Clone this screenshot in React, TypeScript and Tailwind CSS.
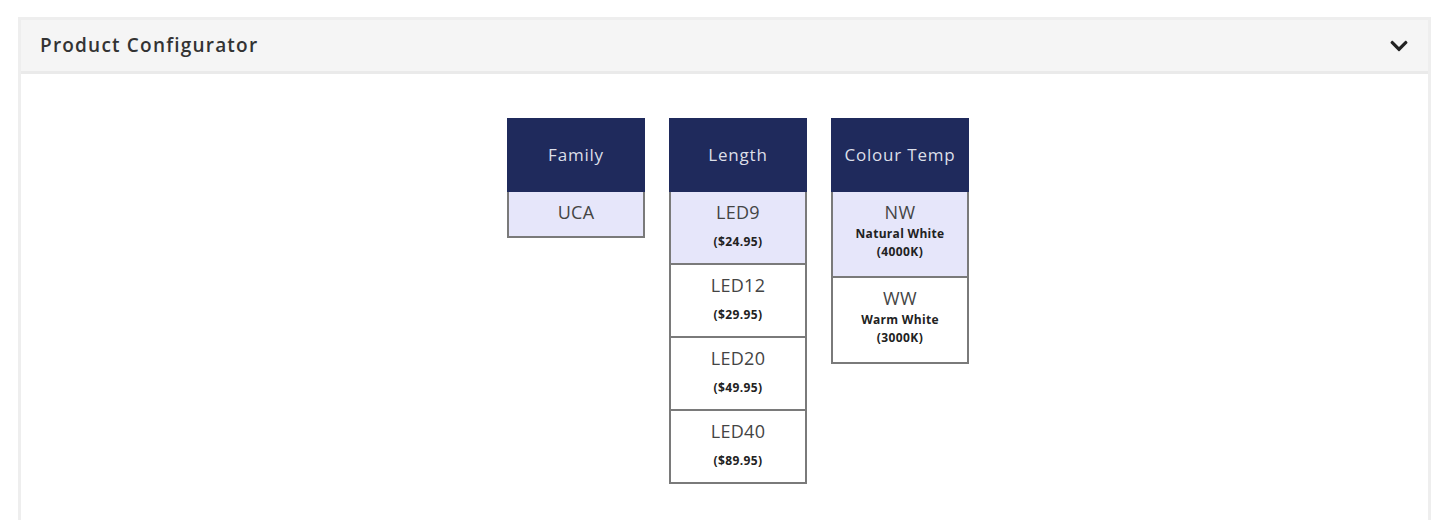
import React from 'react';
import { FaChevronDown } from 'react-icons/fa';

interface Option {
  code: string;
  label?: string;
  sub?: string;
  selected?: boolean;
}

interface Column {
  title: string;
  rowHeight: string;
  options: Option[];
}

const COLUMNS: Column[] = [
  {
    title: 'Family',
    rowHeight: 'h-[46px]',
    options: [{ code: 'UCA', selected: true }],
  },
  {
    title: 'Length',
    rowHeight: 'h-[73px]',
    options: [
      { code: 'LED9', sub: '($24.95)', selected: true },
      { code: 'LED12', sub: '($29.95)' },
      { code: 'LED20', sub: '($49.95)' },
      { code: 'LED40', sub: '($89.95)' },
    ],
  },
  {
    title: 'Colour Temp',
    rowHeight: 'h-[86px]',
    options: [
      { code: 'NW', label: 'Natural White', sub: '(4000K)', selected: true },
      { code: 'WW', label: 'Warm White', sub: '(3000K)' },
    ],
  },
];

const OptionColumn: React.FC<{ column: Column }> = ({ column }) => (
  <div className="w-[138px] border-2 border-b-0 border-[#7a7a7a] self-start">
    {/* Column heading */}
    <div className="h-[74px] -mx-[2px] -mt-[2px] bg-[#1f2a5c] flex items-center justify-center text-[17px] tracking-[0.8px] text-[#dcdfe8]">
      {column.title}
    </div>
    {column.options.map(opt => (
      <div
        key={opt.code}
        className={`${column.rowHeight} flex flex-col items-center pt-[9px] text-[#444] border-b-2 border-[#7a7a7a] cursor-pointer ${
          opt.selected ? 'bg-[#e6e6fa]' : 'bg-white'
        }`}
      >
        <span className="text-[18px] leading-[22px] tracking-[0.3px]">{opt.code}</span>
        {opt.label && (
          <span className="text-[12px] leading-[18px] font-bold text-[#222] tracking-[0.3px] mt-[2px]">
            {opt.label}
          </span>
        )}
        {opt.sub && (
          <span
            className={`text-[12px] leading-[18px] font-bold text-[#222] tracking-[0.4px] ${
              opt.label ? '' : 'mt-[10px]'
            }`}
          >
            {opt.sub}
          </span>
        )}
      </div>
    ))}
  </div>
);

const App: React.FC = () => {
  return (
    <div
      className="min-h-[520px] bg-white pt-[17px] pl-[18px] pr-[17px]"
      style={{ fontFamily: '"Open Sans", "Liberation Sans", sans-serif' }}
    >
      <div className="border-[3px] border-b-0 border-[#eeeeee] h-[503px] flex flex-col">
        {/* Header */}
        <div className="h-[54px] bg-[#f5f5f5] border-b-[3px] border-[#eaeaea] flex items-center justify-between pl-[19px] pr-[19px]">
          <h2 className="text-[19px] font-semibold text-[#333] tracking-[1.2px]">Product Configurator</h2>
          <FaChevronDown className="text-[#222] w-[20px] h-[20px]" />
        </div>

        {/* Configurator columns */}
        <div className="flex justify-center gap-[24px] pt-[44px] pl-[27px]">
          {COLUMNS.map(col => (
            <OptionColumn key={col.title} column={col} />
          ))}
        </div>
      </div>
    </div>
  );
};

export default App;
